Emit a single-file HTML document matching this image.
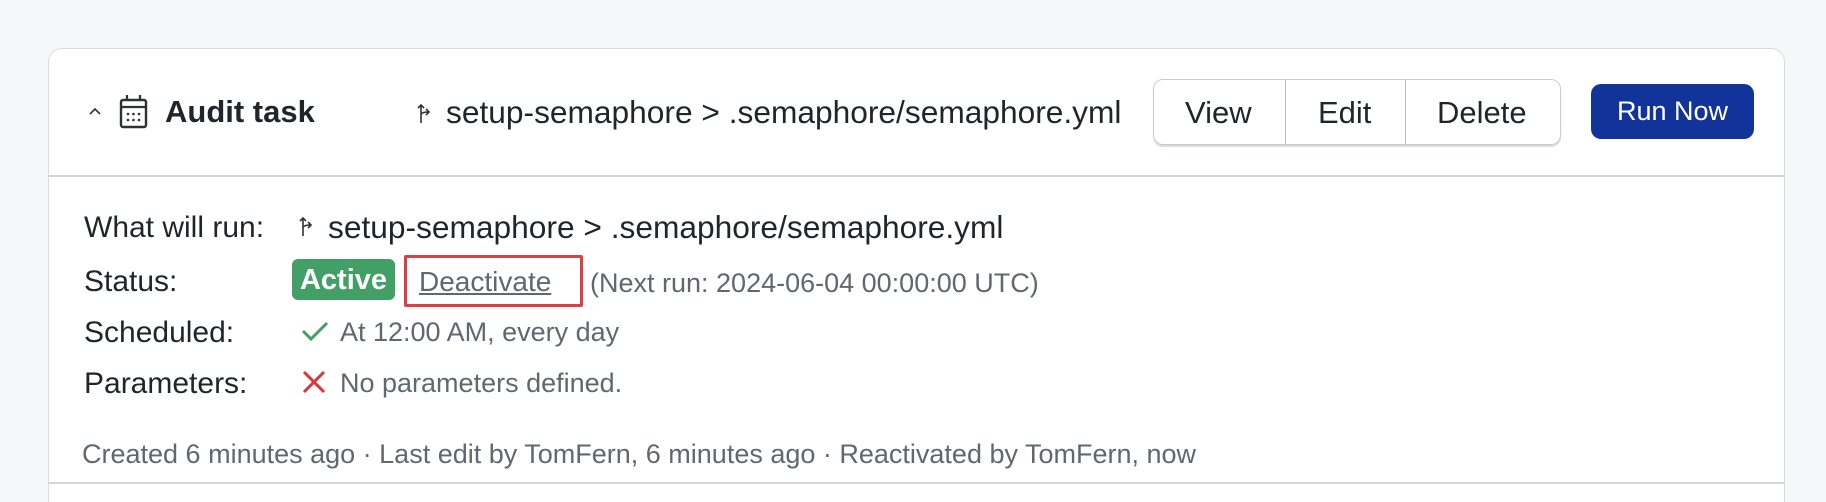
<!DOCTYPE html>
<html style="overflow:hidden;height:502px"><head><style>
html,body{overflow:hidden}
body{margin:0;width:1826px;height:502px;background:#f6f7f9;position:relative;font-family:"Liberation Sans",sans-serif;color:#1f262b}
.card{position:absolute;left:48px;top:48px;width:1737px;height:470px;background:#fff;border:1px solid #d9dcdf;border-bottom:none;border-radius:14px 14px 0 0;box-sizing:border-box;max-height:454px}
.a{position:absolute;white-space:nowrap}
.hl{position:absolute;left:48px;width:1737px;height:2px;background:#d4d6d8}
.lbl{font-size:30px;color:#1f262b;left:84px}
.g{color:#5f686e;font-size:27px}
</style></head><body>
<div class="card"></div>
<div class="hl" style="top:175px"></div>
<div class="hl" style="top:482px"></div>
<svg class="a" style="left:88px;top:106px" width="14" height="10" viewBox="0 0 14 10"><path d="M2 8l5-5 5 5" fill="none" stroke="#333" stroke-width="1.6"/></svg>
<svg class="a" style="left:118px;top:94px" width="32" height="36" viewBox="0 0 32 36"><rect x="3" y="6" width="25" height="27" rx="2" fill="none" stroke="#2b3236" stroke-width="2.4"/><line x1="3" y1="13" x2="28" y2="13" stroke="#2b3236" stroke-width="2.2"/><line x1="9" y1="1" x2="9" y2="7" stroke="#2b3236" stroke-width="2.2"/><line x1="22" y1="1" x2="22" y2="7" stroke="#2b3236" stroke-width="2.2"/><g fill="#2b3236"><circle cx="10" cy="20" r="1.3"/><circle cx="15.5" cy="20" r="1.3"/><circle cx="21" cy="20" r="1.3"/><circle cx="10" cy="26" r="1.3"/><circle cx="15.5" cy="26" r="1.3"/><circle cx="21" cy="26" r="1.3"/></g></svg>
<div class="a" style="left:165px;top:94px;font-size:31px;font-weight:bold">Audit task</div>
<svg class="a" style="left:416px;top:102px" width="16" height="22" viewBox="0 0 16 22"><path d="M5 21V3M2 6l3-3 3 3M5 12c2-2 5-2 7-2M10 7l3 3-3 3" fill="none" stroke="#333" stroke-width="1.6"/></svg>
<div class="a" style="left:446px;top:94px;font-size:31.7px">setup-semaphore &gt; .semaphore/semaphore.yml</div>
<div class="a" style="left:1153px;top:79px;width:406px;height:64px;border:1px solid #c9ccce;border-radius:10px;box-shadow:0 2px 1px #d9dbdc"></div>
<div class="a" style="left:1285px;top:80px;width:1px;height:64px;background:#b9bcbe"></div>
<div class="a" style="left:1405px;top:80px;width:1px;height:64px;background:#b9bcbe"></div>
<div class="a" style="left:1185px;top:95px;font-size:31px">View</div>
<div class="a" style="left:1318px;top:95px;font-size:31px">Edit</div>
<div class="a" style="left:1437px;top:95px;font-size:31px">Delete</div>
<div class="a" style="left:1591px;top:84px;width:163px;height:55px;background:#12349a;border-radius:10px;color:#fff;font-size:27px;line-height:55px;text-align:center">Run Now</div>
<div class="a lbl" style="top:211px">What will run:</div>
<svg class="a" style="left:298px;top:215px" width="16" height="22" viewBox="0 0 16 22"><path d="M5 21V3M2 6l3-3 3 3M5 12c2-2 5-2 7-2M10 7l3 3-3 3" fill="none" stroke="#333" stroke-width="1.6"/></svg>
<div class="a" style="left:328px;top:209px;font-size:31.7px">setup-semaphore &gt; .semaphore/semaphore.yml</div>
<div class="a lbl" style="top:265px">Status:</div>
<div class="a" style="left:292px;top:259px;width:103px;height:41px;background:#42a066;border-radius:6px;color:#fff;font-size:29px;font-weight:bold;line-height:43px;text-align:center">Active</div>
<div class="a" style="left:404px;top:255px;width:173px;height:46px;border:3px solid #dc4045;border-radius:2px"></div>
<div class="a g" style="left:419px;top:266px;font-size:28px;text-decoration:underline">Deactivate</div>
<div class="a g" style="left:590px;top:268px">(Next run: 2024-06-04 00:00:00 UTC)</div>
<div class="a lbl" style="top:316px">Scheduled:</div>
<svg class="a" style="left:301px;top:320px" width="28" height="22" viewBox="0 0 28 22"><path d="M2 11l8 8L26 3" fill="none" stroke="#3f9f66" stroke-width="3"/></svg>
<div class="a g" style="left:340px;top:317px">At 12:00 AM, every day</div>
<div class="a lbl" style="top:367px">Parameters:</div>
<svg class="a" style="left:302px;top:370px" width="24" height="24" viewBox="0 0 24 24"><path d="M2 2l20 20M22 2L2 22" stroke="#d7383c" stroke-width="3"/></svg>
<div class="a g" style="left:340px;top:368px">No parameters defined.</div>
<div class="a g" style="left:82px;top:439px">Created 6 minutes ago · Last edit by TomFern, 6 minutes ago · Reactivated by TomFern, now</div>
</body></html>
